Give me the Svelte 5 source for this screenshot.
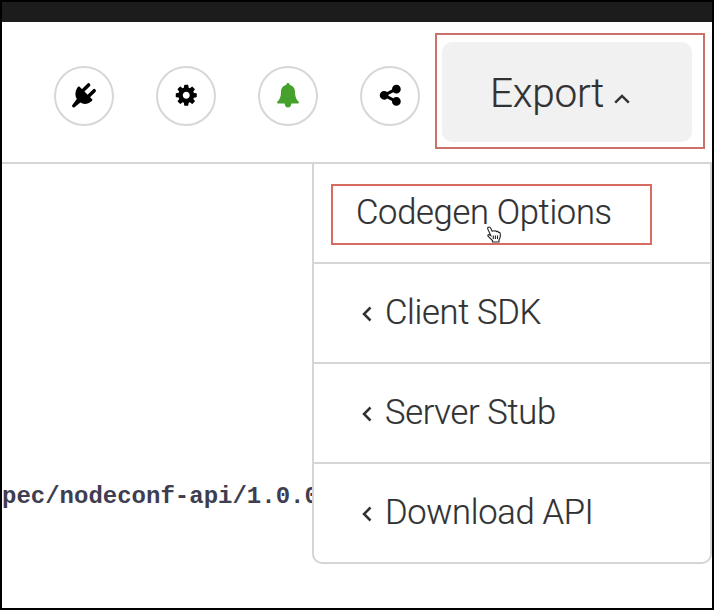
<script>
  const cog = "M1152 896q0-106-75-181t-181-75-181 75-75 181 75 181 181 75 181-75 75-181zm512-109v222q0 12-8 23t-20 13l-185 28q-19 54-39 91 35 50 107 138 10 12 10 25t-9 23q-27 37-99 108t-94 71q-12 0-26-9l-138-108q-44 23-91 38-16 136-29 186-7 28-36 28h-222q-14 0-24.5-8.5t-11.5-21.5l-28-184q-49-16-90-37l-141 107q-10 9-25 9-14 0-25-11-126-114-165-168-7-10-7-23 0-12 8-23 15-21 51-66.5t54-70.5q-27-50-41-99l-183-27q-13-2-21-12.5t-8-23.5v-222q0-12 8-23t19-13l186-28q14-46 39-92-40-57-107-138-10-12-10-24 0-10 9-23 26-36 98.5-107.5t94.5-71.5q13 0 26 10l138 107q44-23 91-38 16-136 29-186 7-28 36-28h222q14 0 24.5 8.5t11.5 21.5l28 184q49 16 90 37l142-107q9-9 24-9 13 0 25 10 129 119 165 170 7 8 7 22 0 12-8 23-15 21-51 66.5t-54 70.5q26 50 41 98l183 28q13 2 21 12.5t8 23.5z";
  const share = "M1344 1024q133 0 226.5 93.5t93.5 226.5-93.5 226.5-226.5 93.5-226.5-93.5-93.5-226.5q0-12 2-34l-360-180q-92 86-218 86-133 0-226.5-93.5t-93.5-226.5 93.5-226.5 226.5-93.5q126 0 218 86l360-180q-2-22-2-34 0-133 93.5-226.5t226.5-93.5 226.5 93.5 93.5 226.5-93.5 226.5-226.5 93.5q-126 0-218-86l-360 180q2 22 2 34t-2 34l360 180q92-86 218-86z";
  const exports = ["Client SDK", "Server Stub", "Download API"];
</script>

<div class="frame">
  <div class="topbar"></div>
  <header>
    <div class="tools">
      <button aria-label="Integrations">
        <svg width="28" height="28" viewBox="0 0 28 28">
          <path d="M9.4 5.6L22.4 18.6Q22.6 20 20.8 20.8C17 23.6 13.2 23.4 10.4 21.6L4.6 26.2Q2.2 27 2 24.4L6.8 18C4.8 14.8 4.9 10.8 7.2 7Q8.2 5.2 9.4 5.6Z" />
          <path class="prong" d="M12.5 10L18.6 3.9M18 15.8L24.2 9.7" />
        </svg>
      </button>
      <button aria-label="Settings">
        <svg width="24.5" height="24.5" viewBox="0 0 1792 1792"><path d={cog} /></svg>
      </button>
      <button aria-label="Notifications" class="green">
        <svg width="24" height="26" viewBox="0 0 24 26">
          <path d="M12 1C13.3 1 13.8 1.8 13.6 2.9C17.3 3.6 19 6.3 19 10C19 15 20.3 17.8 23 20Q23 21.5 21.5 21.5H15.4Q15 25.4 12 25.4T8.6 21.5H2.5Q1 21.5 1 20C3.7 17.8 5 15 5 10C5 6.3 6.7 3.6 10.4 2.9C10.2 1.8 10.7 1 12 1Z" />
        </svg>
      </button>
      <button aria-label="Share">
        <svg width="24.5" height="24.5" viewBox="0 0 1792 1792"><path d={share} /></svg>
      </button>
    </div>
    <div class="callout">
      <button class="export">
        <span>Export</span>
        <svg width="16" height="10" viewBox="0 0 16 10"><path class="line" d="M1.2 8.6L8 1.9L14.8 8.6" /></svg>
      </button>
    </div>
  </header>
  <main>
    <div class="path">pec/nodeconf-api/1.0.0</div>
    <div class="menu">
      <div class="row first">
        <div class="highlight"><span>Codegen Options</span></div>
        <svg class="cursor" width="14" height="17" viewBox="0 0 14 17">
          <path d="M1 1.5Q2.6 .2 3.6 2L5.2 5.2Q6 4.2 7.2 5.2Q8.4 4.2 9.4 5.6Q10.8 5 11.6 6.4Q13.2 6 13.3 8V11L12 14V16H5.5V14.5L1.2 10.5Q.2 8.8 2 8.6L3.8 9.6L1 3.6Q.3 2.2 1 1.5ZM6.3 9.5V13M8.4 9.5V13M10.5 9.5V13" />
        </svg>
      </div>
      {#each exports as label}
        <div class="row">
          <svg width="10" height="16" viewBox="0 0 10 16"><path class="line" d="M8.5 1.5L2 8L8.5 14.5" /></svg>
          <span>{label}</span>
        </div>
      {/each}
    </div>
  </main>
</div>

<style>
  .frame { width: 714px; height: 610px; box-sizing: border-box; border: 2px solid #000; background: #fff; overflow: hidden; font-family: Roboto, sans-serif; font-weight: 300; color: #303133; }
  .topbar { height: 20px; background: #1c1c1c; }
  header { height: 142px; box-sizing: border-box; border-bottom: 2px solid #d5d5d5; display: flex; align-items: flex-start; }
  .tools { display: flex; gap: 42px; padding: 44px 15px 0 52px; }
  button { padding: 0; font: inherit; color: inherit; }
  .tools button { width: 60px; height: 60px; border: 2px solid #d5d7d9; border-radius: 50%; background: #fff; display: grid; place-items: center; padding-bottom: 2px; color: #000; }
  .tools .green { color: #45a12b; }
  svg { display: block; fill: currentColor; flex: none; }
  .prong { fill: none; stroke: currentColor; stroke-width: 3.5; stroke-linecap: round; }
  .line { fill: none; stroke: #303133; stroke-width: 2.5; }
  .callout { width: 270px; height: 116px; box-sizing: border-box; margin-top: 11px; border: 2px solid #cb736b; padding: 7px 5px; }
  .export { width: 250px; height: 100px; border: 0; border-radius: 10px; background: #f1f1f1; display: flex; align-items: center; padding: 2px 0 0 48px; font-size: 40.5px; letter-spacing: -.25px; -webkit-text-stroke: .2px; }
  .export span { width: 124px; text-align: left; white-space: nowrap; }
  .export svg { margin-top: 11px; }
  main { display: flex; align-items: flex-start; }
  .path { width: 310px; padding-top: 318px; overflow: hidden; white-space: nowrap; font: bold 24px/30px "Liberation Mono", monospace; color: #3e3e50; }
  .menu { width: 400px; height: 400px; box-sizing: border-box; border: solid #d5d5d5; border-width: 0 2px 2px; border-radius: 0 0 10px 10px; background: #fff; font-size: 34.5px; letter-spacing: -.3px; -webkit-text-stroke: .2px; }
  .row { height: 100px; box-sizing: border-box; display: flex; align-items: center; gap: 13px; padding-left: 48px; padding-bottom: 2px; position: relative; }
  .row:not(:last-child) { border-bottom: 2px solid #d5d5d5; }
  .row:last-child { padding-bottom: 4px; }
  .row > svg:not(.cursor) { margin-top: 4px; }
  .row.first { padding: 20px 0 0 17px; align-items: flex-start; }
  .highlight { width: 321px; height: 61px; box-sizing: border-box; border: 2px solid #d86b62; padding-left: 23px; line-height: 53px; white-space: nowrap; }
  .cursor { position: absolute; left: 173px; top: 62px; }
  .cursor path { fill: #fff; stroke: #222; stroke-width: 1.1; }
</style>
